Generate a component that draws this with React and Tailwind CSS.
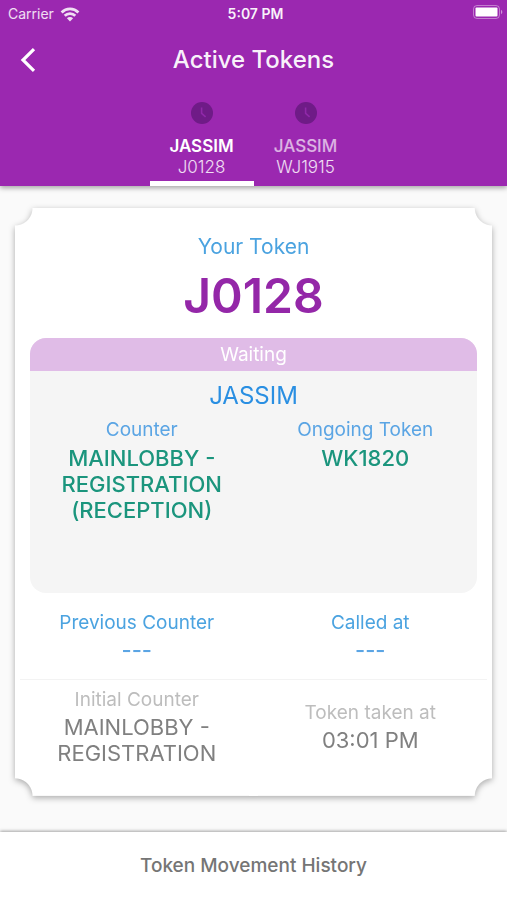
import { useState } from 'react'

const tokens = [
    { id: 'J0128', name: 'JASSIM' },
    { id: 'WJ1915', name: 'JASSIM' },
]

function WifiIcon() {
    return (
        <svg viewBox="0 0 20 15" className="w-5 h-[15px]" fill="none" stroke="currentColor" strokeWidth="2.8">
            <path d="M1.6 5.4a12 12 0 0 1 16.8 0" />
            <path d="M4.7 8.7a7.6 7.6 0 0 1 10.6 0" />
            <path d="M10 14.4 6.9 11.3a4.4 4.4 0 0 1 6.2 0Z" fill="currentColor" stroke="none" />
        </svg>
    )
}

function BatteryIcon() {
    return (
        <svg viewBox="0 0 30 15" className="w-[30px] h-[15px]">
            <rect x="0.5" y="0.5" width="26" height="13" rx="3.5" fill="none" stroke="white" strokeOpacity="0.4" />
            <rect x="2.5" y="2.5" width="22" height="9" rx="1" fill="white" />
            <path d="M28 4.8c1.8.8 1.8 3.6 0 4.4Z" fill="white" fillOpacity="0.5" />
        </svg>
    )
}

function ClockIcon() {
    return (
        <svg viewBox="0 0 22 22" className="w-[22px] h-[22px]">
            <circle cx="11" cy="11" r="11" fill="#6f1b87" />
            <path d="M10.6 5.5v5.8l4 3.6" fill="none" stroke="#9029a9" strokeWidth="1.6" />
        </svg>
    )
}

function StatusBar() {
    return (
        <div className="grid grid-cols-3 items-center h-7 pl-2 pr-1 text-sm leading-7">
            <div className="flex items-center gap-1.5 text-white/85">
                <span>Carrier</span>
                <WifiIcon />
            </div>
            <span className="text-center font-semibold text-white/95">5:07 PM</span>
            <div className="flex justify-end pb-1">
                <BatteryIcon />
            </div>
        </div>
    )
}

function Field({ label, value, labelClass, valueClass }) {
    return (
        <div className="flex-1 px-6 text-center">
            <dt className={`text-[19px] leading-7 ${labelClass}`}>{label}</dt>
            <dd className={`text-[22px] leading-[26px] ${valueClass}`}>{value}</dd>
        </div>
    )
}

export default function App() {
    const [active, setActive] = useState(0)

    return (
        <div className="flex flex-col min-h-screen bg-[#fafafa] font-[Inter,'Liberation_Sans',sans-serif]">
            <header className="relative bg-[#9b28b0] text-white shadow-[0_2px_5px_rgba(0,0,0,0.35)]">
                <StatusBar />
                <div className="grid grid-cols-[56px_1fr_56px] items-center h-16">
                    <button type="button" aria-label="Back" className="flex pl-5">
                        <svg viewBox="0 0 16 24" className="w-4 h-6" fill="none" stroke="currentColor" strokeWidth="3.2">
                            <path d="M14 1.2 3 12l11 10.8" />
                        </svg>
                    </button>
                    <h1 className="text-center text-2xl font-medium text-white/95">Active Tokens</h1>
                </div>
                <div role="tablist" className="flex justify-center">
                    {tokens.map((token, i) => (
                        <button
                            key={token.id}
                            type="button"
                            role="tab"
                            aria-selected={i === active}
                            onClick={() => setActive(i)}
                            className={`flex flex-col items-center w-[104px] h-[94px] pt-2.5 border-b-[5px] ${i === active ? 'border-white' : 'border-transparent'}`}
                        >
                            <ClockIcon />
                            <span className={`mt-3 text-[17px] leading-[21px] ${i === active ? 'font-semibold' : 'font-medium text-white/65'}`}>
                                {token.name}
                            </span>
                            <span className="text-[17px] leading-[21px] font-light text-white/85">{token.id}</span>
                        </button>
                    ))}
                </div>
            </header>

            <main className="flex-1 px-[15px] pt-[22px] pb-[34px]">
                <div className="drop-shadow-[0_2px_3px_rgba(0,0,0,0.32)]">
                    {/* Ticket with a bite taken out of each corner */}
                    <section className="bg-white pt-6 pb-[30px] [mask:radial-gradient(circle_at_0_0,transparent_17px,black_18px)_0_0/51%_51%_no-repeat,radial-gradient(circle_at_100%_0,transparent_17px,black_18px)_100%_0/51%_51%_no-repeat,radial-gradient(circle_at_0_100%,transparent_17px,black_18px)_0_100%/51%_51%_no-repeat,radial-gradient(circle_at_100%_100%,transparent_17px,black_18px)_100%_100%/51%_51%_no-repeat]">
                        <h2 className="text-center text-[21px] leading-[30px] text-[#4ba3e0]">Your Token</h2>
                        <p className="pt-0.5 text-center text-[48px] leading-[64px] font-semibold text-[#9427a8]">J0128</p>

                        <div className="mx-[15px] mt-2.5 h-[255px] rounded-2xl overflow-hidden bg-[#f5f5f5]">
                            <p className="h-[33px] text-center text-[19px] leading-[33px] text-white bg-[#e0bce7]">Waiting</p>
                            <h3 className="mt-[9px] text-center text-2xl leading-8 text-[#2a8fe2]">JASSIM</h3>
                            <dl className="flex mt-1">
                                <Field
                                    label="Counter"
                                    value="MAINLOBBY - REGISTRATION (RECEPTION)"
                                    labelClass="pb-px text-[#5ba5e4]"
                                    valueClass="font-medium text-[#1b957d]"
                                />
                                <Field
                                    label="Ongoing Token"
                                    value="WK1820"
                                    labelClass="pb-px text-[#5ba5e4] whitespace-nowrap"
                                    valueClass="font-medium text-[#1b957d]"
                                />
                            </dl>
                        </div>

                        <div className="px-[5px]">
                            <dl className="flex pt-4 pb-4 border-b border-[#f3f3f3]">
                                <Field label="Previous Counter" value="---" labelClass="text-[#4ba3e0]" valueClass="font-medium text-[#5ba5e4]" />
                                <Field label="Called at" value="---" labelClass="text-[#4ba3e0]" valueClass="font-medium text-[#5ba5e4]" />
                            </dl>
                            <dl className="flex items-center pt-1.5">
                                <Field
                                    label="Initial Counter"
                                    value="MAINLOBBY - REGISTRATION"
                                    labelClass="text-[#bdbdbd]"
                                    valueClass="text-[#808080]"
                                />
                                <Field
                                    label="Token taken at"
                                    value="03:01 PM"
                                    labelClass="text-[#bdbdbd]"
                                    valueClass="text-[#808080]"
                                />
                            </dl>
                        </div>
                    </section>
                </div>
            </main>

            <footer className="bg-white shadow-[0_-1px_3px_rgba(0,0,0,0.35)]">
                <button type="button" className="w-full h-[68px] text-[19px] font-medium text-[#757575]">
                    Token Movement History
                </button>
            </footer>
        </div>
    )
}
